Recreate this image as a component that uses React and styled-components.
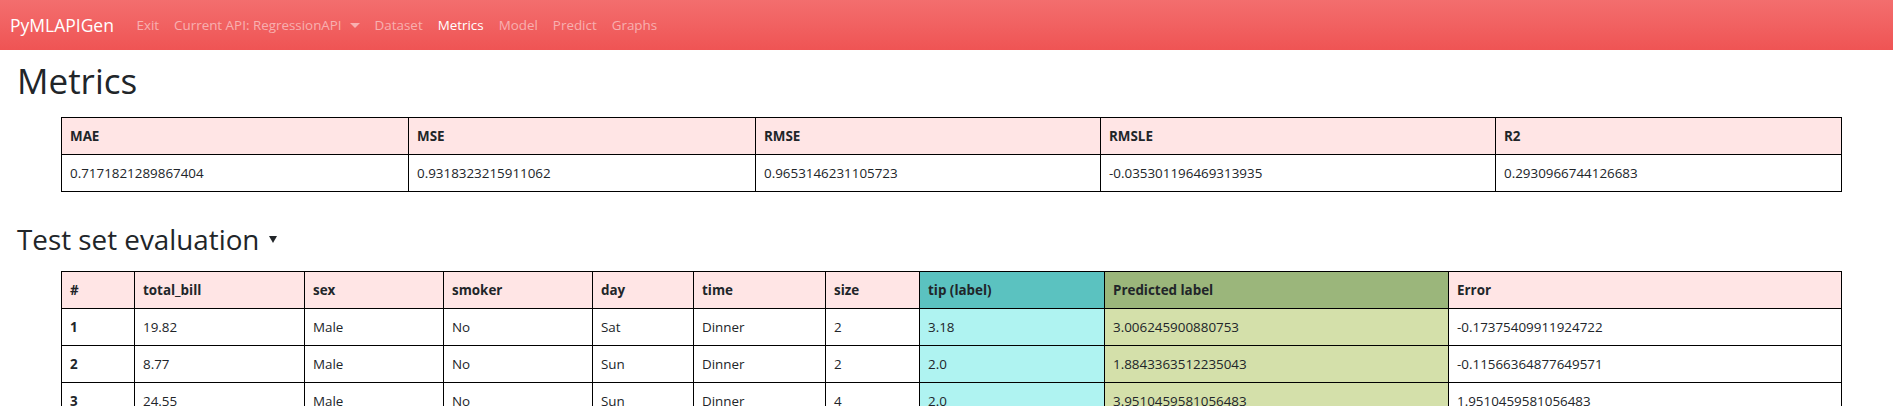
import React from "react";
import styled, { createGlobalStyle } from "styled-components";

const metrics = [
  { name: "MAE", value: "0.7171821289867404", width: 347 },
  { name: "MSE", value: "0.9318323215911062", width: 347 },
  { name: "RMSE", value: "0.9653146231105723", width: 345 },
  { name: "RMSLE", value: "-0.035301196469313935", width: 395 },
  { name: "R2", value: "0.2930966744126683", width: 346 },
];

const columns = [
  { key: "total_bill", title: "total_bill", width: 170 },
  { key: "sex", title: "sex", width: 139 },
  { key: "smoker", title: "smoker", width: 149 },
  { key: "day", title: "day", width: 101 },
  { key: "time", title: "time", width: 132 },
  { key: "size", title: "size", width: 94 },
  { key: "tip", title: "tip (label)", width: 185, tone: "label" },
  { key: "predicted", title: "Predicted label", width: 344, tone: "predicted" },
  { key: "error", title: "Error", width: 393 },
];

const rows = [
  {
    total_bill: "19.82",
    sex: "Male",
    smoker: "No",
    day: "Sat",
    time: "Dinner",
    size: "2",
    tip: "3.18",
    predicted: "3.006245900880753",
    error: "-0.17375409911924722",
  },
  {
    total_bill: "8.77",
    sex: "Male",
    smoker: "No",
    day: "Sun",
    time: "Dinner",
    size: "2",
    tip: "2.0",
    predicted: "1.8843363512235043",
    error: "-0.11566364877649571",
  },
  {
    total_bill: "24.55",
    sex: "Male",
    smoker: "No",
    day: "Sun",
    time: "Dinner",
    size: "4",
    tip: "2.0",
    predicted: "3.9510459581056483",
    error: "1.9510459581056483",
  },
];

const navItems = ["Dataset", "Metrics", "Model", "Predict", "Graphs"];

export default function App() {
  return (
    <>
      <GlobalStyle />
      <Navbar>
        <Brand>PyMLAPIGen</Brand>
        <NavList>
          <NavLink>Exit</NavLink>
          <NavLink>
            Current API: RegressionAPI
            <Caret />
          </NavLink>
          {navItems.map((item) => (
            <NavLink key={item} active={item === "Metrics"}>
              {item}
            </NavLink>
          ))}
        </NavList>
      </Navbar>

      <Main>
        <PageTitle>Metrics</PageTitle>
        <DataTable>
          <colgroup>
            {metrics.map((m) => (
              <col key={m.name} style={{ width: m.width }} />
            ))}
          </colgroup>
          <thead>
            <tr>
              {metrics.map((m) => (
                <HeadCell key={m.name}>{m.name}</HeadCell>
              ))}
            </tr>
          </thead>
          <tbody>
            <tr>
              {metrics.map((m) => (
                <BodyCell key={m.name}>{m.value}</BodyCell>
              ))}
            </tr>
          </tbody>
        </DataTable>

        <SectionTitle>
          Test set evaluation
          <Toggle />
        </SectionTitle>
        <DataTable>
          <colgroup>
            <col style={{ width: 73 }} />
            {columns.map((c) => (
              <col key={c.key} style={{ width: c.width }} />
            ))}
          </colgroup>
          <thead>
            <tr>
              <HeadCell>#</HeadCell>
              {columns.map((c) => (
                <HeadCell key={c.key} tone={c.tone}>
                  {c.title}
                </HeadCell>
              ))}
            </tr>
          </thead>
          <tbody>
            {rows.map((row, i) => (
              <tr key={i}>
                <RowHead>{i + 1}</RowHead>
                {columns.map((c) => (
                  <BodyCell key={c.key} tone={c.tone}>
                    {row[c.key]}
                  </BodyCell>
                ))}
              </tr>
            ))}
          </tbody>
        </DataTable>
      </Main>
    </>
  );
}

const GlobalStyle = createGlobalStyle`
  html, body {
    margin: 0;
    padding: 0;
    overflow: hidden;
    background: #fff;
  }
  body {
    font-family: "Open Sans", "Noto Sans", sans-serif;
    color: #212529;
  }
`;

const Navbar = styled.nav`
  display: flex;
  align-items: center;
  height: 50px;
  padding: 0 10px;
  background: linear-gradient(#f36e6e, #ef5454);
`;

const Brand = styled.a`
  font-size: 17.5px;
  color: #fff;
  margin-right: 15px;
  white-space: nowrap;
`;

const NavList = styled.div`
  display: flex;
  align-items: center;
`;

const NavLink = styled.a`
  display: flex;
  align-items: center;
  padding: 0 7.5px;
  font-size: 13.4px;
  color: ${({ active }) => (active ? "#fff" : "rgba(255, 255, 255, 0.5)")};
  white-space: nowrap;
`;

const Caret = styled.span`
  display: inline-block;
  margin-left: 8px;
  border-top: 5px solid currentColor;
  border-left: 5px solid transparent;
  border-right: 5px solid transparent;
`;

const Main = styled.main`
  padding: 0 17px;
`;

const PageTitle = styled.h1`
  margin: 10px 0 0;
  font-size: 35px;
  font-weight: 500;
  line-height: 1.2;
`;

const SectionTitle = styled.h2`
  display: flex;
  align-items: center;
  margin: 31px 0 0;
  font-size: 27.8px;
  font-weight: 500;
  line-height: 1.2;
`;

const Toggle = styled.span`
  margin-left: 10px;
  border-top: 7px solid #212529;
  border-left: 4.5px solid transparent;
  border-right: 4.5px solid transparent;
`;

const toneHead = {
  label: "#5bc2c0",
  predicted: "#9bb67b",
};

const toneBody = {
  label: "#aff3f1",
  predicted: "#d4e0aa",
};

const DataTable = styled.table`
  width: 1780px;
  margin: 15px 0 0 44px;
  table-layout: fixed;
  border-collapse: collapse;
  font-size: 13.4px;
  line-height: 21px;
`;

const HeadCell = styled.th`
  padding: 7.5px 8px;
  border: 1px solid #000;
  text-align: left;
  font-weight: 700;
  background: ${({ tone }) => toneHead[tone] || "#ffe5e5"};
  white-space: nowrap;
`;

const RowHead = styled.th`
  padding: 7.5px 8px;
  border: 1px solid #000;
  text-align: left;
  font-weight: 700;
`;

const BodyCell = styled.td`
  padding: 7.5px 8px;
  border: 1px solid #000;
  background: ${({ tone }) => toneBody[tone] || "#fff"};
  white-space: nowrap;
`;
